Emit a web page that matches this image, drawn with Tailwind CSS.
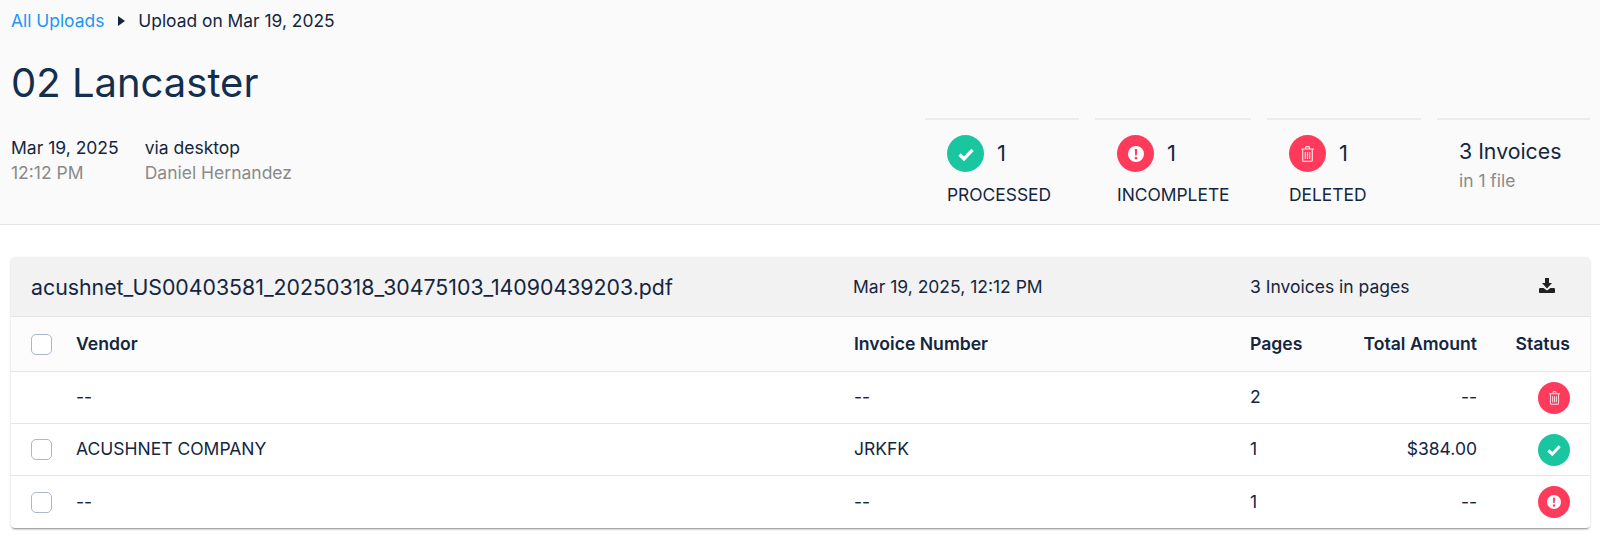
<!doctype html>
<html>

<head>
    <meta charset="UTF-8">
    <meta name="viewport" content="width=device-width, initial-scale=1.0">
    <script src="https://cdn.jsdelivr.net/npm/@tailwindcss/browser@4"></script>
    <title>Upload on Mar 19, 2025</title>
</head>

<body class="bg-white font-['Inter',sans-serif] text-[#14263f] overflow-hidden h-[545px]">
    <!-- upload summary -->
    <header class="h-[225px] bg-[#fafafa] border-b border-[#e4e4e4] pl-[11px] pr-[10px] relative">
        <nav class="flex items-center h-[42px] text-[17.400px]">
            <a href="#" class="text-[#2196f3]">All Uploads</a>
            <svg class="w-[7px] h-[10px] ml-[14px] mr-[13px]" viewBox="0 0 7 10"><path d="M0 0l7 5-7 5z" fill="#14263f"/></svg>
            <span>Upload on Mar 19, 2025</span>
        </nav>
        <h1 class="mt-[15px] text-[40px] leading-[52px] text-[#12304d]">02 Lancaster</h1>
        <div class="flex gap-[26px] pt-[26px] text-[17.500px] leading-[25px]">
            <div>
                <div>Mar 19, 2025</div>
                <div class="text-[#8a8a8a]">12:12 PM</div>
            </div>
            <div>
                <div>via desktop</div>
                <div class="text-[#8a8a8a]">Daniel Hernandez</div>
            </div>
        </div>
        <div class="grid grid-cols-[154px_156px_154px_153px] gap-4 absolute right-[10px] top-[118px]">
            <div class="border-t-2 border-[#ececec] pl-[22px] pt-[15px]">
                <div class="flex items-center gap-[13px] text-[22px]">
                    <span class="w-[37px] h-[37px] rounded-full bg-[#1ac6a0] flex items-center justify-center">
                        <svg class="w-[16px] h-[16px]" viewBox="0 0 16 16"><path d="M1.500 8.500l4.500 4.300 8.500-9" fill="none" stroke="#fff" stroke-width="3.400"/></svg>
                    </span>
                    <span>1</span>
                </div>
                <div class="mt-[13px] text-[17.400px] leading-5">PROCESSED</div>
            </div>
            <div class="border-t-2 border-[#ececec] pl-[22px] pt-[15px]">
                <div class="flex items-center gap-[13px] text-[22px]">
                    <span class="w-[37px] h-[37px] rounded-full bg-[#ff3b5c] flex items-center justify-center">
                        <svg class="w-[16px] h-[16px]" viewBox="0 0 16 16"><path fill-rule="evenodd" d="M8 0a8 8 0 110 16A8 8 0 018 0zM6.800 3l.4 6.500h1.600L9.200 3zM8 10.700a1.400 1.400 0 100 2.800 1.400 1.400 0 000-2.800z" fill="#fff"/></svg>
                    </span>
                    <span>1</span>
                </div>
                <div class="mt-[13px] text-[17.400px] leading-5">INCOMPLETE</div>
            </div>
            <div class="border-t-2 border-[#ececec] pl-[22px] pt-[15px]">
                <div class="flex items-center gap-[13px] text-[22px]">
                    <span class="w-[37px] h-[37px] rounded-full bg-[#ff3b5c] flex items-center justify-center">
                        <svg class="w-[13px] h-[16px]" viewBox="0 0 13 16" fill="none" stroke="#ffdbe1" stroke-width="1.200"><path d="M0 3h13M4.300 3l.8-2.300h2.800L8.700 3M1.700 3v11.200c0 .6.400 1.100 1 1.100h7.600c.6 0 1-.5 1-1.100V3M4.300 6v7M6.500 6v7M8.700 6v7"/></svg>
                    </span>
                    <span>1</span>
                </div>
                <div class="mt-[13px] text-[17.400px] leading-5">DELETED</div>
            </div>
            <div class="border-t-2 border-[#ececec] pl-[22px] pt-[17px]">
                <div class="text-[21.300px] leading-7">3 Invoices</div>
                <div class="mt-[4px] text-[17.400px] leading-6 text-[#8a8a8a]">in 1 file</div>
            </div>
        </div>
    </header>

    <main class="ml-[11px] mr-[10px] mt-[32px] rounded-[4px] shadow-[0_2px_2px_-1px_rgba(0,0,0,0.4),0_1px_3px_rgba(0,0,0,0.12)] overflow-hidden bg-white">
        <!-- file row -->
        <div class="grid grid-cols-[822px_397px_1fr_40px] items-center h-[60px] pt-[2px] bg-[#f2f2f2] border-b border-[#e4e4e4] pl-[20px] pr-[23px]">
            <div class="text-[21.300px]">acushnet_US00403581_20250318_30475103_14090439203.pdf</div>
            <div class="text-[17.500px]">Mar 19, 2025, 12:12 PM</div>
            <div class="text-[17.500px]">3 Invoices in pages</div>
            <svg class="w-[16px] h-[15px] justify-self-center -translate-y-[2px]" viewBox="0 0 16 15"><path d="M6 0h4v5h3L8 10.500 3 5h3z" fill="#222"/><path d="M0 11.500c0-.8.500-1.500 1.200-1.500h3.300L8 12.500l3.500-2.500h3.300c.7 0 1.200.7 1.200 1.500V14c0 .6-.4 1-1 1H1c-.6 0-1-.4-1-1z" fill="#222"/></svg>
        </div>
        <!-- table -->
        <div class="grid grid-cols-[65px_778px_396px_100px_127px_93px] items-center h-[55px] bg-[#fcfcfc] border-b border-[#e4e4e4] text-[17.600px] font-semibold">
            <span class="ml-[20px] w-[21px] h-[21px] rounded-[5px] border-[1.500px] border-[#a9b8d0] bg-white"></span>
            <div>Vendor</div>
            <div>Invoice Number</div>
            <div>Pages</div>
            <div class="text-right">Total Amount</div>
            <div class="text-right">Status</div>
        </div>
        <div class="grid grid-cols-[65px_778px_396px_100px_127px_93px] items-center h-[52px] border-b border-[#e4e4e4] text-[17.500px]">
            <span></span>
            <div>--</div>
            <div>--</div>
            <div>2</div>
            <div class="text-right">--</div>
            <span class="justify-self-end w-[32px] h-[32px] rounded-full bg-[#ff3b5c] flex items-center justify-center">
                <svg class="w-[11px] h-[14px]" viewBox="0 0 13 16" fill="none" stroke="#ffdbe1" stroke-width="1.200"><path d="M0 3h13M4.300 3l.8-2.300h2.800L8.700 3M1.700 3v11.200c0 .6.400 1.100 1 1.100h7.600c.6 0 1-.5 1-1.100V3M4.300 6v7M6.500 6v7M8.700 6v7"/></svg>
            </span>
        </div>
        <div class="grid grid-cols-[65px_778px_396px_100px_127px_93px] items-center h-[52px] border-b border-[#e4e4e4] text-[17.500px]">
            <span class="ml-[20px] w-[21px] h-[21px] rounded-[5px] border-[1.500px] border-[#a9b8d0] bg-white"></span>
            <div>ACUSHNET COMPANY</div>
            <div>JRKFK</div>
            <div>1</div>
            <div class="text-right">$384.00</div>
            <span class="justify-self-end w-[32px] h-[32px] rounded-full bg-[#1ac6a0] flex items-center justify-center">
                <svg class="w-[14px] h-[14px]" viewBox="0 0 16 16"><path d="M1.500 8.500l4.500 4.300 8.500-9" fill="none" stroke="#fff" stroke-width="3.400"/></svg>
            </span>
        </div>
        <div class="grid grid-cols-[65px_778px_396px_100px_127px_93px] items-center h-[52px] text-[17.500px]">
            <span class="ml-[20px] w-[21px] h-[21px] rounded-[5px] border-[1.500px] border-[#a9b8d0] bg-white"></span>
            <div>--</div>
            <div>--</div>
            <div>1</div>
            <div class="text-right">--</div>
            <span class="justify-self-end w-[32px] h-[32px] rounded-full bg-[#ff3b5c] flex items-center justify-center">
                <svg class="w-[14px] h-[14px]" viewBox="0 0 16 16"><path fill-rule="evenodd" d="M8 0a8 8 0 110 16A8 8 0 018 0zM6.800 3l.4 6.500h1.600L9.200 3zM8 10.700a1.400 1.400 0 100 2.800 1.400 1.400 0 000-2.800z" fill="#fff"/></svg>
            </span>
        </div>
    </main>
</body>

</html>
